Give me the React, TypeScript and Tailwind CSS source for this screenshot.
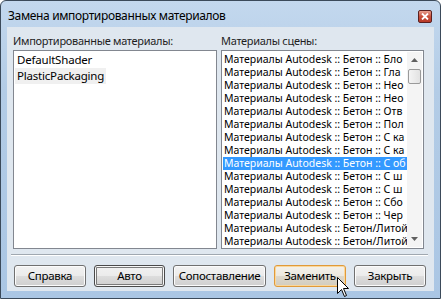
import React from "react";

const font = { fontFamily: '"Noto Sans", "Open Sans", sans-serif' };

const sceneItems = [
  "Бло",
  "Гла",
  "Нео",
  "Нео",
  "Отв",
  "Пол",
  "С ка",
  "С ка",
  "С об",
  "С ш",
  "С ш",
  "Сбо",
  "Чер",
];

// кнопки диалога
function Btn({
  label,
  kind = "normal",
}: {
  label: string;
  kind?: "normal" | "default" | "hover";
}) {
  const base =
    "h-[22px] rounded-[3px] border text-[11.5px] tracking-[-0.3px] text-black flex items-center justify-center";
  const styles = {
    normal:
      "border-[#707070] bg-[linear-gradient(#f2f2f2_0%,#ebebeb_50%,#dddddd_50%,#cfcfcf_100%)] shadow-[inset_0_0_0_1px_#fcfcfc]",
    default:
      "border-[#4a4a4a] bg-[linear-gradient(#f2f2f2_0%,#ebebeb_50%,#dddddd_50%,#cfcfcf_100%)] shadow-[inset_0_0_0_1px_#f8f8f8,inset_0_0_0_2px_#7a7a7a]",
    hover:
      "border-[#e09a3a] bg-[linear-gradient(#f4f1ea_0%,#ece8df_50%,#ddd8cc_50%,#d2ccbf_100%)] shadow-[inset_0_0_0_1px_#fbd79a]",
  };
  return <div className={`${base} ${styles[kind]}`}>{label}</div>;
}

export default function App() {
  return (
    <div
      className="relative w-[441px] h-[299px] flex flex-col border border-[#3b4a5a] rounded-t-[6px] bg-[linear-gradient(#c3d8ee,#b3cce6_30%,#aac6e4)] overflow-hidden"
      style={font}
    >
      {/* Title bar */}
      <div className="h-[26px] shrink-0 flex items-center pl-[7px] pr-[8px]">
        <span className="text-[12px] tracking-[-0.35px] text-black leading-none mt-[4px]">
          Замена импортированных материалов
        </span>
        <div className="ml-auto mt-[5px] w-[14px] h-[13px] rounded-[2px] border border-[#5a2020] bg-[linear-gradient(#e8a090,#c8503c_50%,#b83a28)] flex items-center justify-center">
          <svg width="8" height="7" viewBox="0 0 8 7">
            <path
              d="M1 0.5 L7 6.5 M7 0.5 L1 6.5"
              stroke="#fff"
              strokeWidth="1.8"
            />
          </svg>
        </div>
      </div>

      {/* Client area */}
      <div className="flex-1 mx-[6px] mb-[7px] bg-[#dfe7ef] flex flex-col pl-[6px] pr-[7px] pt-[6px]">
        <div className="grid grid-cols-[204px_203px] gap-[4px]">
          <div className="flex flex-col">
            <div className="text-[11px] tracking-[-0.3px] leading-[16px] h-[16px] text-[#1e1e1e]">
              Импортированные материалы:
            </div>
            <div className="mt-[1px] h-[199px] border border-[#828790] bg-white px-[1px] py-[1px]">
              <div className="text-[11.5px] tracking-[-0.2px] leading-[16px] px-[2px] text-black">
                DefaultShader
              </div>
              <div className="text-[11.5px] tracking-[-0.2px] leading-[16px] px-[2px] text-black bg-[#f0f0f0] w-max">
                PlasticPackaging
              </div>
            </div>
          </div>
          <div className="flex flex-col">
            <div className="text-[11px] tracking-[-0.3px] leading-[16px] h-[16px] text-[#1e1e1e]">
              Материалы сцены:
            </div>
            <div className="mt-[1px] h-[199px] border border-[#828790] bg-white flex p-[1px]">
              <div className="flex-1 overflow-hidden whitespace-nowrap pt-[1px]">
                {sceneItems.map((s, i) => (
                  <div
                    key={i}
                    className={`text-[10.5px] leading-[13px] h-[13px] px-[1px] overflow-hidden ${
                      i === 8 ? "bg-[#3399ff] text-white" : "text-black"
                    }`}
                  >
                    Материалы Autodesk :: Бетон :: {s}
                  </div>
                ))}
                <div className="text-[10.5px] leading-[13px] h-[13px] px-[1px] overflow-hidden text-black">
                  Материалы Autodesk :: Бетон/Литой
                </div>
                <div className="text-[10.5px] leading-[13px] h-[13px] px-[1px] overflow-hidden text-black">
                  Материалы Autodesk :: Бетон/Литой
                </div>
              </div>
              {/* scrollbar */}
              <div className="w-[15px] shrink-0 bg-[#f4f4f4] flex flex-col">
                <div className="h-[16px] flex items-center justify-center">
                  <svg width="7" height="4" viewBox="0 0 7 4">
                    <path d="M0 4 L3.5 0 L7 4 Z" fill="#606060" />
                  </svg>
                </div>
                <div className="mx-[1px] mt-[1px] h-[15px] rounded-[2px] border border-[#9a9a9a] bg-[linear-gradient(90deg,#f4f4f4,#e2e2e2)]" />
                <div className="flex-1" />
                <div className="h-[16px] flex items-center justify-center">
                  <svg width="7" height="4" viewBox="0 0 7 4">
                    <path d="M0 0 L3.5 4 L7 0 Z" fill="#606060" />
                  </svg>
                </div>
              </div>
            </div>
          </div>
        </div>

        {/* separator */}
        <div className="mt-[5px] h-[2px] border-t border-[#a0a8b0] border-b border-b-white -ml-[2px] -mr-[1px]" />

        {/* buttons */}
        <div className="mt-[9px] flex gap-[8px] pl-[1px]">
          <div className="w-[72px]">
            <Btn label="Справка" />
          </div>
          <div className="w-[71px]">
            <Btn label="Авто" kind="default" />
          </div>
          <div className="w-[93px]">
            <Btn label="Сопоставление" />
          </div>
          <div className="w-[72px]">
            <Btn label="Заменить" kind="hover" />
          </div>
          <div className="w-[72px]">
            <Btn label="Закрыть" />
          </div>
        </div>
      </div>

      {/* mouse cursor */}
      <svg
        className="absolute left-[336px] top-[276px]"
        width="13"
        height="21"
        viewBox="0 0 13 21"
      >
        <path
          d="M0.5 0.5 L0.5 16.5 L4.5 12.5 L7.5 19.5 L9.5 18.5 L6.5 11.5 L11.5 11.5 Z"
          fill="#fff"
          stroke="#000"
          strokeWidth="1"
        />
      </svg>
    </div>
  );
}
